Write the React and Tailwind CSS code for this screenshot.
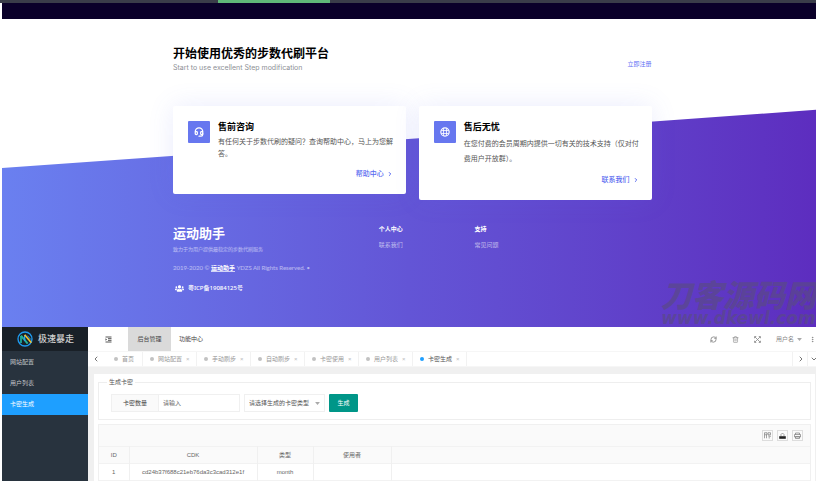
import { ChevronDown, ChevronLeft, ChevronRight, EllipsisVertical, Headset, RefreshCw, Trash2 } from 'lucide-react';
import { FaUsers } from 'react-icons/fa';

const features = [
  {
    title: '售前咨询',
    text: '有任何关于步数代刷的疑问？查询帮助中心，马上为您解答。',
    link: '帮助中心',
    Icon: Headset,
    leading: 'leading-[12px]'
  },
  {
    title: '售后无忧',
    text: '在您付费的会员周期内提供一切有关的技术支持（仅对付费用户开放群）。',
    link: '联系我们',
    Icon: LifeRing,
    leading: 'leading-[15px]'
  }
];

const footerLinks = [
  { title: '个人中心', link: '联系我们' },
  { title: '支持', link: '常见问题' }
];

const menu = ['网站配置', '用户列表', '卡密生成'];
const tabs = ['网站配置', '手动刷步', '自动刷步', '卡密使用', '用户列表', '卡密生成'];
const current = '卡密生成';

const rows = [{ id: 1, cdk: 'cd24b37f688c21eb76da3c3cad312e1f', type: 'month', user: '' }];

function LifeRing({ className }) {
  return (
    <svg viewBox="0 0 24 24" className={className} fill="none" stroke="currentColor" strokeWidth="2.8">
      <circle cx="12" cy="12" r="10" />
      <path d="M8.5 3v18M15.5 3v18M3 8.5h18M3 15.5h18" strokeWidth="2" />
    </svg>
  );
}

function Logo() {
  return (
    <svg viewBox="0 0 48 48" className="size-4" fill="none">
      <circle cx="24" cy="24" r="21" stroke="#1e9bf0" strokeWidth="4" />
      <path d="M12 36V15" stroke="#1fb5a0" strokeWidth="5" />
      <path d="M12 14l20 24" stroke="#22b39a" strokeWidth="6" />
      <path d="M23 30V12" stroke="#2c9fe8" strokeWidth="4" />
      <path d="M23 11l20 24" stroke="#f2c230" strokeWidth="5" />
      <path d="M31 14l11 12" stroke="#2c9fe8" strokeWidth="3" />
    </svg>
  );
}

function IndentIcon() {
  return (
    <svg viewBox="0 0 14 14" className="size-[7px]" fill="none" stroke="#444" strokeWidth="1.8">
      <path d="M1 2h12M6 5.3h7M6 8.7h7M1 12h12" />
      <path d="M1 4.5l3 2.5-3 2.5z" fill="#444" stroke="none" />
    </svg>
  );
}

function ExpandIcon() {
  return (
    <svg viewBox="0 0 14 14" className="size-[7px]" fill="none" stroke="currentColor" strokeWidth="1.6">
      <path d="M2 2l10 10M12 2L2 12M1 4.5V1h3.5M9.5 1H13v3.5M13 9.5V13H9.5M4.5 13H1V9.5" />
    </svg>
  );
}

function Caret() {
  return (
    <svg viewBox="0 0 8 5" className="h-[3px] w-[5px]" fill="#aaa">
      <path d="M0 0h8L4 5z" />
    </svg>
  );
}

function Feature({ title, text, link, Icon, leading }) {
  return (
    <article className="flex flex-1 gap-2 rounded-xs bg-white pt-[15px] pr-[11px] pb-[14px] pl-[15px] shadow-[0_0_26px_rgba(90,110,240,0.13)]">
      <span className="flex size-[22px] shrink-0 items-center justify-center rounded-[1px] bg-[#6777ef] text-white">
        <Icon className="size-[10px]" strokeWidth={3} />
      </span>
      <div className="flex flex-1 flex-col">
        <h3 className="text-[9px] leading-[11px] font-bold text-black">{title}</h3>
        <p className={`mt-1 text-[7px] text-[#555] ${leading}`}>{text}</p>
        <a href="#help" className="mt-2 mr-[2px] flex items-center gap-[3px] self-end text-[7px] leading-[12px] font-medium text-[#5a6bf0]">
          {link}
          <ChevronRight className="size-[6px]" strokeWidth={4} />
        </a>
      </div>
    </article>
  );
}

function Landing() {
  return (
    <section className="relative grid bg-white">
      <div className="[grid-area:1/1] bg-linear-to-r from-[#6a80f0] via-[#6355d6] to-[#5d2dbf] [clip-path:polygon(0_48.4%,100%_29.5%,100%_100%,0_100%)]" />
      <div className="z-10 ml-[21%] w-[58.8%] [grid-area:1/1] pt-[27px] pb-[33px]">
        <div className="flex items-end justify-between">
          <div>
            <h2 className="text-[12px] leading-4 font-bold text-black">开始使用优秀的步数代刷平台</h2>
            <p className="font-['Inter'] text-[7px] leading-[12px] text-[#8d9096]">Start to use excellent Step modification</p>
          </div>
          <a href="#register" className="pb-1 text-[6px] leading-[12px] text-[#6470f5]">立即注册</a>
        </div>
        <div className="mt-8 flex items-start gap-[13px]">
          {features.map((f) => (
            <Feature key={f.title} {...f} />
          ))}
        </div>
        <footer className="mt-[23px] flex text-[6px] text-white">
          <div className="w-[43%]">
            <div className="text-[13px] leading-5 font-bold">运动助手</div>
            <p className="text-[5px] leading-[12px] text-white/55">致力于为用户提供最稳定的步数代刷服务</p>
            <p className="mt-[7px] font-['Lato','Noto_Sans_CJK_SC',sans-serif] leading-[12px] text-white/55">
              2019-2020 © <a href="#home" className="border-b border-white/70 font-bold text-white">运动助手</a> YDZS All Rights Reserved. •
            </p>
            <p className="mt-2 flex items-center gap-1 pl-[2px] leading-[12px] font-medium">
              <FaUsers className="size-[9px]" />
              粤ICP备19084125号
            </p>
          </div>
          {footerLinks.map((col) => (
            <div key={col.title} className="w-[20%]">
              <h4 className="leading-[12px] font-bold">{col.title}</h4>
              <a href="#link" className="mt-1 block leading-[12px] text-white/60">{col.link}</a>
            </div>
          ))}
        </footer>
      </div>
      <div className="absolute right-0 bottom-0 z-20 text-center font-bold text-[#5a4a86]/70 italic">
        <div className="text-[31px] leading-[30px] font-black">刀客源码网</div>
        <div className="font-['DejaVu_Sans'] text-[17px] leading-[17px]">www.dkewl.com</div>
      </div>
    </section>
  );
}

function Sidebar() {
  return (
    <aside className="w-[86px] shrink-0 bg-[#28333e] text-[#c3c6ca]">
      <div className="flex h-6 items-center gap-[5px] bg-[#192027] pl-[15px] text-[9px] font-medium text-[#d0d0d0]">
        <Logo />
        极速暴走
      </div>
      <nav className="pt-px">
        {menu.map((item) => (
          <a
            key={item}
            href="#menu"
            className={item === current ? 'flex h-[21px] items-center bg-[#1e9fff] pl-2 text-white' : 'flex h-[21px] items-center pl-2'}
          >
            {item}
          </a>
        ))}
      </nav>
    </aside>
  );
}

function TopNav() {
  return (
    <header className="flex h-6 items-center justify-between text-[#444]">
      <div className="flex h-full items-center">
        <button type="button" aria-label="收起菜单" className="pr-4 pl-[17px]">
          <IndentIcon />
        </button>
        <a href="#admin" className="flex h-full w-[43px] items-center justify-center bg-[#dadada]">后台管理</a>
        <a href="#features" className="flex h-full items-center px-2">功能中心</a>
      </div>
      <div className="flex items-center gap-[15px] text-[#888]">
        <button type="button" aria-label="刷新"><RefreshCw className="size-[7px]" strokeWidth={3} /></button>
        <button type="button" aria-label="清理"><Trash2 className="size-[7px]" strokeWidth={2} /></button>
        <button type="button" aria-label="全屏"><ExpandIcon /></button>
        <button type="button" className="flex items-center gap-[3px]">
          用户名
          <Caret />
        </button>
        <button type="button" aria-label="更多" className="-ml-2"><EllipsisVertical className="size-[7px]" strokeWidth={3} /></button>
      </div>
    </header>
  );
}

function TabBar() {
  return (
    <div className="flex h-4 border-y border-[#f6f6f6] text-[#999]">
      <button type="button" aria-label="左移" className="w-4 pl-1 text-[#777]"><ChevronLeft className="size-2" strokeWidth={3} /></button>
      <a href="#home" className="flex w-[39px] items-center gap-1 border-r border-[#f2f2f2] pl-[10px]">
        <span className="size-1 rounded-full bg-[#c2c2c2]" />
        首页
      </a>
      {tabs.map((tab) => (
        <div
          key={tab}
          className={tab === current ? 'flex w-[54px] items-center gap-1 border-r border-[#f2f2f2] pl-[7px] text-[#555]' : 'flex w-[54px] items-center gap-1 border-r border-[#f2f2f2] pl-[7px]'}
        >
          <span className={tab === current ? 'size-1 rounded-full bg-[#1e9fff]' : 'size-1 rounded-full bg-[#c2c2c2]'} />
          <a href="#tab">{tab}</a>
          <button type="button" aria-label="关闭" className="text-[#bbb]">×</button>
        </div>
      ))}
      <button type="button" aria-label="右移" className="ml-auto w-4 border-x border-[#f2f2f2] pl-1 text-[#777]"><ChevronRight className="size-2" strokeWidth={3} /></button>
      <button type="button" aria-label="展开" className="w-2 overflow-hidden pl-[2px] text-[#777]"><ChevronDown className="size-2" strokeWidth={3} /></button>
    </div>
  );
}

function GenerateForm() {
  return (
    <form className="px-1 pt-1">
      <fieldset className="border border-[#eee] px-3 pb-[7px]">
        <legend className="-ml-1 px-[2px] leading-[8px] text-[#555]">生成卡密</legend>
        <div className="mt-2 flex h-[18px] items-stretch gap-1">
          <div className="flex border border-[#f0f0f0]">
            <label htmlFor="count" className="flex w-[47px] items-center justify-end border-r border-[#f0f0f0] bg-[#fafafa] pr-[11px] text-[#444]">卡密数量</label>
            <input id="count" placeholder="请输入" className="w-20 pl-1 outline-none placeholder:text-[#666]" />
          </div>
          <div className="flex items-center border border-[#f0f0f0] pr-1">
            <select aria-label="卡密类型" className="w-[70px] appearance-none pl-1 text-[#555]">
              <option>请选择生成的卡密类型</option>
            </select>
            <Caret />
          </div>
          <button type="button" className="w-[29px] rounded-[1px] bg-[#009688] text-white">生成</button>
        </div>
      </fieldset>
    </form>
  );
}

function ToolButton({ label, children }) {
  return (
    <button type="button" aria-label={label} className="flex size-[11px] items-center justify-center border border-[#ddd] text-[#666]">
      <svg viewBox="0 0 14 14" className="size-[7px]" fill="none" stroke="currentColor" strokeWidth="1.2">{children}</svg>
    </button>
  );
}

function CdkTable() {
  return (
    <div className="mx-1 mt-1 border border-[#f0f0f0]">
      <div className="flex h-[21px] items-center justify-end gap-1 bg-[#fafafa] pr-[7px]">
        <ToolButton label="筛选列">
          <path d="M1 1.5h5v4H1zM8 1.5h5v4H8zM1 5.5v7M5 5.5v7M8 8h5l-2.5 2.5V13" />
        </ToolButton>
        <ToolButton label="导出">
          <path d="M1 9h12v4H1z" fill="#222" stroke="#222" />
          <path d="M4 8V5l3-3 3 3v3" />
        </ToolButton>
        <ToolButton label="打印">
          <path d="M3 5V2h8v3M1 5h12v5H1zM3 9h8v4H3z" />
        </ToolButton>
      </div>
      <table className="w-full table-fixed border-collapse text-center text-[#666]">
        <thead className="bg-[#fafafa]">
          <tr className="h-[17px] border-y border-[#f2f2f2]">
            <th className="w-[30px] border-r border-[#f0f0f0] font-normal">ID</th>
            <th className="w-32 border-r border-[#f0f0f0] font-normal">CDK</th>
            <th className="w-14 border-r border-[#f0f0f0] font-normal">类型</th>
            <th className="w-[78px] border-r border-[#f0f0f0] font-normal">使用者</th>
            <th />
          </tr>
        </thead>
        <tbody>
          {rows.map((row) => (
            <tr key={row.id} className="h-[17px] border-b border-[#f2f2f2]">
              <td className="border-r border-[#f0f0f0]">{row.id}</td>
              <td className="border-r border-[#f0f0f0]">{row.cdk}</td>
              <td className="border-r border-[#f0f0f0]">{row.type}</td>
              <td className="border-r border-[#f0f0f0]">{row.user}</td>
              <td />
            </tr>
          ))}
        </tbody>
      </table>
    </div>
  );
}

function Admin() {
  return (
    <section className="flex bg-white font-['Liberation_Sans','Noto_Sans_CJK_SC',sans-serif] text-[6px] leading-[9px]">
      <Sidebar />
      <main className="min-w-0 flex-1">
        <TopNav />
        <TabBar />
        <div className="bg-[#f0f0f0] pt-[7px] pr-px pl-[6px]">
          <div className="bg-white pb-1">
            <GenerateForm />
            <CdkTable />
          </div>
        </div>
      </main>
    </section>
  );
}

export default function App() {
  return (
    <div className="h-screen overflow-hidden bg-white font-['Noto_Sans','Noto_Sans_CJK_SC',sans-serif]">
      <div className="flex h-[3px] bg-[#3a3d49]">
        <span className="ml-[26.7%] w-28 bg-[#5fb878]" />
      </div>
      <div className="pl-[2px]">
        <div className="h-4 bg-[#0a0029]" />
        <Landing />
        <Admin />
      </div>
    </div>
  );
}
